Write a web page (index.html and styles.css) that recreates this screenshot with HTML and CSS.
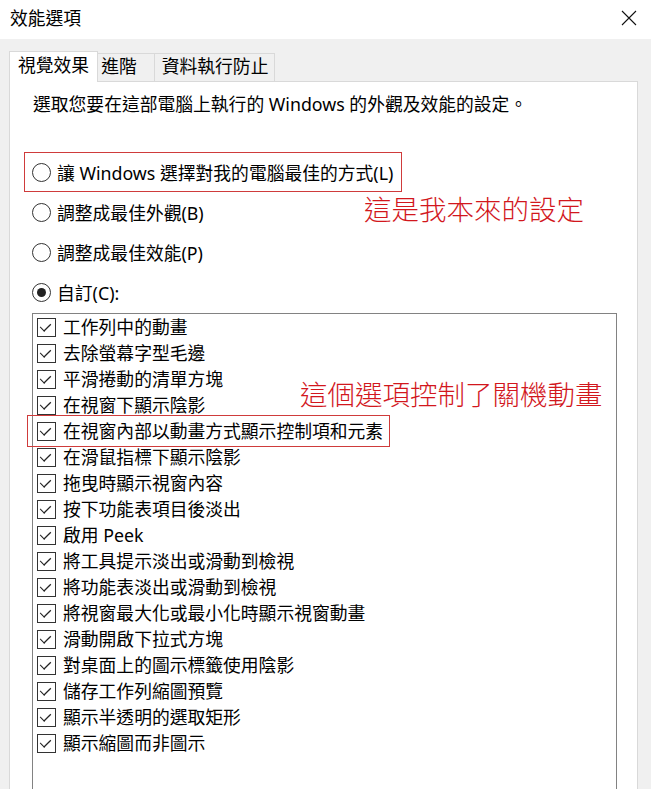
FILE: index.html
```html
<!DOCTYPE html>
<html lang="zh-Hant">
<head>
<meta charset="utf-8">
<title>效能選項</title>
<link rel="stylesheet" href="styles.css">
</head>
<body>
<div class="window">
  <div class="titlebar">
    <span class="title">效能選項</span>
    <svg class="close" width="16" height="16" viewBox="0 0 16 16"><path d="M1 1 L15 15 M15 1 L1 15" stroke="#111" stroke-width="1.1" fill="none"/></svg>
  </div>
  <div class="body">
    <div class="tabs">
      <div class="tab active">視覺效果</div>
      <div class="tab second">進階</div>
      <div class="tab">資料執行防止</div>
    </div>
    <div class="panel">
      <p class="desc">選取您要在這部電腦上執行的 Windows 的外觀及效能的設定。</p>
      <div class="radio-row boxed"><span class="radio"></span><span>讓 Windows 選擇對我的電腦最佳的方式(L)</span></div>
      <div class="radio-row"><span class="radio"></span><span>調整成最佳外觀(B)</span></div>
      <div class="radio-row"><span class="radio"></span><span>調整成最佳效能(P)</span></div>
      <div class="radio-row"><span class="radio checked"></span><span>自訂(C):</span></div>
      <div class="listbox">
        <div class="item"><span class="cb"></span>工作列中的動畫</div>
        <div class="item"><span class="cb"></span>去除螢幕字型毛邊</div>
        <div class="item"><span class="cb"></span>平滑捲動的清單方塊</div>
        <div class="item"><span class="cb"></span>在視窗下顯示陰影</div>
        <div class="item"><span class="cb"></span>在視窗內部以動畫方式顯示控制項和元素</div>
        <div class="item"><span class="cb"></span>在滑鼠指標下顯示陰影</div>
        <div class="item"><span class="cb"></span>拖曳時顯示視窗內容</div>
        <div class="item"><span class="cb"></span>按下功能表項目後淡出</div>
        <div class="item"><span class="cb"></span>啟用 Peek</div>
        <div class="item"><span class="cb"></span>將工具提示淡出或滑動到檢視</div>
        <div class="item"><span class="cb"></span>將功能表淡出或滑動到檢視</div>
        <div class="item"><span class="cb"></span>將視窗最大化或最小化時顯示視窗動畫</div>
        <div class="item"><span class="cb"></span>滑動開啟下拉式方塊</div>
        <div class="item"><span class="cb"></span>對桌面上的圖示標籤使用陰影</div>
        <div class="item"><span class="cb"></span>儲存工作列縮圖預覽</div>
        <div class="item"><span class="cb"></span>顯示半透明的選取矩形</div>
        <div class="item"><span class="cb"></span>顯示縮圖而非圖示</div>
        <div class="mark-box"></div>
      </div>
    </div>
  </div>
  <div class="note note1">這是我本來的設定</div>
  <div class="note note2">這個選項控制了關機動畫</div>
</div>
</body>
</html>
```
FILE: styles.css
```css
html, body {
  margin: 0;
  padding: 0;
  overflow: hidden;
}
body {
  font-family: "Noto Sans", "Noto Sans CJK TC", sans-serif;
  font-size: 17.8px;
  color: #000;
  background: #fff;
}
.window {
  position: relative;
  height: 789px;
  overflow: hidden;
  display: flex;
  flex-direction: column;
}
.titlebar {
  height: 39px;
  flex: none;
  display: flex;
  align-items: center;
  justify-content: space-between;
  padding: 0 14px 0 10px;
  background: #fff;
}
.title {
  line-height: 22px;
  margin-top: -4px;
}
.close {
  margin-top: -4px;
}
.body {
  flex: 1;
  background: #f0f0f0;
  padding: 12px 13px 0 9px;
  display: flex;
  flex-direction: column;
}
.tabs {
  display: flex;
  align-items: flex-end;
  height: 30px;
  flex: none;
  position: relative;
  z-index: 1;
}
.tab {
  box-sizing: border-box;
  height: 28px;
  border: 1px solid #d9d9d9;
  border-bottom: 0;
  background: #f0f0f0;
  padding: 0 6px 0 7px;
  line-height: 25px;
  margin-left: -1px;
  white-space: nowrap;
  flex: none;
}
.tab.second {
  padding: 0 17px 0 3px;
}
.tab.active {
  height: 31px;
  margin-bottom: -1px;
  margin-left: 0;
  background: #fff;
  padding: 0 8px 0 8px;
  line-height: 27px;
}
.panel {
  flex: 1;
  background: #fff;
  border: 1px solid #d9d9d9;
  border-bottom: 0;
  padding: 11px 20px 0 22px;
  display: flex;
  flex-direction: column;
  align-items: flex-start;
}
.desc {
  margin: 0 0 37px 1px;
  line-height: 22px;
}
.radio-row {
  box-sizing: border-box;
  height: 40px;
  display: inline-flex;
  align-items: center;
  gap: 6px;
}
.radio-row.boxed {
  border: 1px solid #cf3b3b;
  margin-left: -8px;
  padding: 0 8px 0 7px;
}
.radio {
  box-sizing: border-box;
  width: 19px;
  height: 19px;
  border: 1px solid #333;
  border-radius: 50%;
  display: flex;
  align-items: center;
  justify-content: center;
  flex: none;
}
.radio.checked::after {
  content: "";
  width: 9px;
  height: 9px;
  border-radius: 50%;
  background: #222;
}
.listbox {
  position: relative;
  align-self: stretch;
  flex: 1;
  margin-top: 1px;
  border: 1px solid #828282;
  border-bottom: 0;
  padding: 0 0 0 4px;
}
.item {
  height: 26px;
  display: flex;
  align-items: center;
  gap: 7px;
  line-height: 26px;
}
.cb {
  box-sizing: border-box;
  width: 19px;
  height: 19px;
  border: 1px solid #333;
  flex: none;
  background: #fff;
  position: relative;
}
.cb::after {
  content: "";
  position: absolute;
  left: 5px;
  top: 2px;
  width: 4px;
  height: 9px;
  border: solid #222;
  border-width: 0 1.3px 1.3px 0;
  transform: rotate(45deg) scaleX(1.25);
  transform-origin: 50% 50%;
}
.mark-box {
  position: absolute;
  left: -6px;
  top: 101px;
  width: 363px;
  height: 32px;
  box-sizing: border-box;
  border: 1px solid #cf3b3b;
}
.note {
  position: absolute;
  font-family: "Noto Sans CJK TC", sans-serif;
  font-weight: 300;
  font-size: 27.5px;
  line-height: 28px;
  color: #d2171d;
  white-space: nowrap;
}
.note1 {
  left: 364px;
  top: 194px;
}
.note2 {
  left: 300px;
  top: 379px;
}
```
